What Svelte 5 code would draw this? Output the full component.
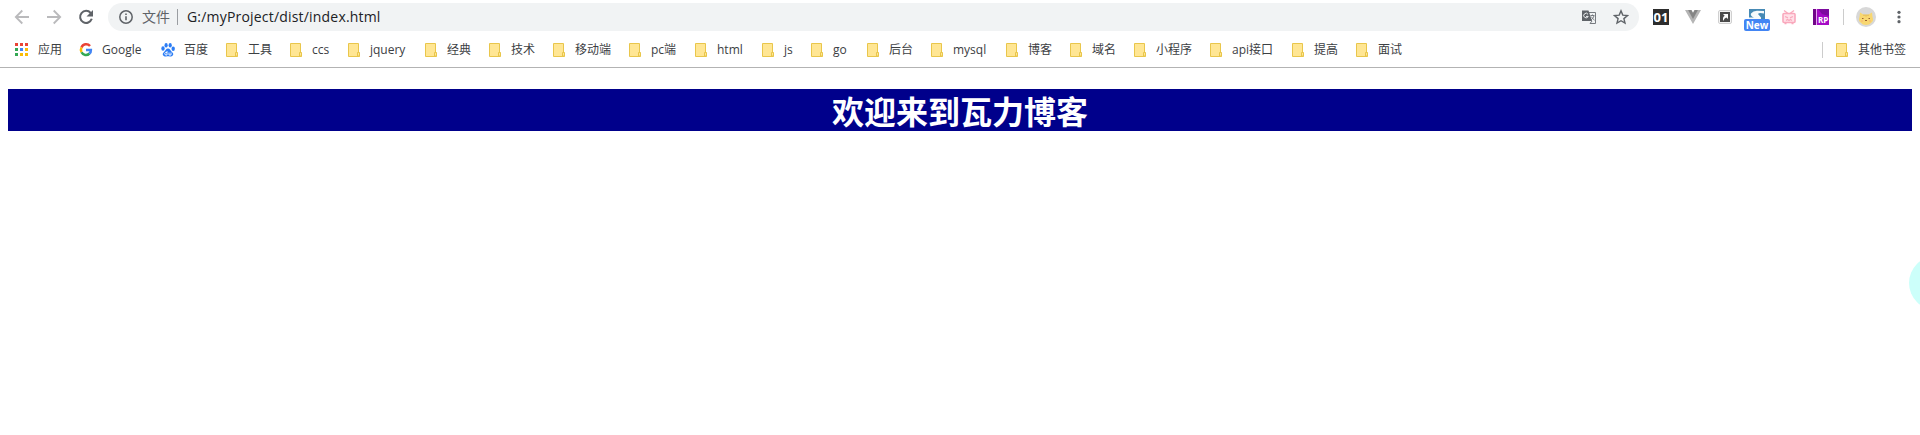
<script>
  const bookmarks = [
    { t: '应用', w: 65, k: 'apps' }, { t: 'Google', w: 82, k: 'google' }, { t: '百度', w: 64, k: 'baidu' },
    { t: '工具', w: 64 }, { t: 'ccs', w: 58 }, { t: 'jquery', w: 77 }, { t: '经典', w: 64 }, { t: '技术', w: 64 },
    { t: '移动端', w: 76 }, { t: 'pc端', w: 66 }, { t: 'html', w: 67 }, { t: 'js', w: 49 }, { t: 'go', w: 56 },
    { t: '后台', w: 64 }, { t: 'mysql', w: 75 }, { t: '博客', w: 64 }, { t: '域名', w: 64 }, { t: '小程序', w: 76 },
    { t: 'api接口', w: 82 }, { t: '提高', w: 64 }, { t: '面试', w: 64 }
  ];
  const dots = ['#ea4335', '#ea4335', '#ea4335', '#34a853', '#4285f4', '#fbbc05', '#34a853', '#fbbc05', '#fbbc05'];
</script>

{#snippet folder()}
  <svg class="ico" width="16" height="16" viewBox="0 0 16 16">
    <path d="M2.500 1.500h10v9.500h1v3.500h-11z" fill="#ffe694" stroke="#e9c64b" />
    <path d="M11.500 14V10.500h2V14z" fill="#ffe694" stroke="#e9c64b" />
  </svg>
{/snippet}

<div class="page">
  <header>
    <div class="toolbar">
      <svg class="nav" viewBox="0 0 16 16"><path d="M15 8H2M8.300 1.500 1.800 8l6.500 6.500" fill="none" stroke="#bababc" stroke-width="1.800" /></svg>
      <svg class="nav" viewBox="0 0 16 16"><path d="M1 8h13M7.700 1.500 14.200 8l-6.500 6.500" fill="none" stroke="#bababc" stroke-width="1.800" /></svg>
      <svg class="nav" viewBox="0 0 16 16"><path d="M12.700 4A6 6 0 1 0 13.800 9.800" fill="none" stroke="#5f6368" stroke-width="2" /><path d="M15 1v6.500H8.500z" fill="#5f6368" /></svg>
      <div class="omnibox">
        <svg class="info" width="16" height="16" viewBox="0 0 16 16"><circle cx="8" cy="8" r="6.200" fill="none" stroke="#5f6368" stroke-width="1.500" /><path d="M7.200 7.200h1.600v4H7.200zM7.200 4.500h1.600V6H7.200z" fill="#5f6368" /></svg>
        <span class="scheme">文件</span>
        <i class="split"></i>
        <span class="url">G:/myProject/dist/index.html</span>
        <svg class="translate" width="16" height="16" viewBox="0 0 16 16">
          <path d="M7 3.500h7.500v11H9" fill="#f1f3f4" stroke="#777b80" />
          <path d="M1 1.500h6.500l3.500 10.500H1z" fill="#5f6368" />
          <path d="M7 5.300A2.300 2.300 0 1 0 7.200 7.400H5" fill="none" stroke="#f1f3f4" />
          <path d="M9.500 6.500h4M11.500 5.500v1M13 7c-.6 1.800-1.700 3-3 4M10.300 8l3.200 3.200M9 14.500l2-2.500" fill="none" stroke="#777b80" />
        </svg>
        <svg class="star" width="16" height="16" viewBox="0 0 16 16"><path d="m8 1.900 1.800 4.200 4.700.4-3.600 3.100 1.100 4.500L8 11.700l-4 2.400 1.100-4.500-3.600-3.100 4.700-.4z" fill="none" stroke="#5f6368" stroke-width="1.400" /></svg>
      </div>
      <div class="extensions">
        <span class="ext one">01</span>
        <svg class="ext" viewBox="0 0 16 16"><path d="M0 1h3.500L8 8.600 12.500 1H16L8 15z" fill="#b5b5b5" /><path d="M3 1h3.500L8 3.800 9.500 1H13L8 10z" fill="#858585" /></svg>
        <svg class="ext" viewBox="0 0 16 16"><rect x="1.500" y="1.500" width="13" height="13" rx="1.500" fill="#f4f4f4" stroke="#d0d0d0" /><rect x="3" y="3" width="10" height="10" fill="#4b4b4b" /><path d="M6 5h5v5L9.300 8.500Q7 9 6.500 12 4.900 8.500 7.700 6.800z" fill="#fff" /></svg>
        <div class="ext badge-host">
          <svg width="16" height="16" viewBox="0 0 16 16"><path d="M0 0h16v16H0z" fill="#478ab5" /><path d="M2 4.500Q4 2 8 1.800L15 2v2.500Q10 3.200 9 5l3 3.500V11H0V8.500h5Q1 7 2 4.500z" fill="#f5f9fb" /></svg>
          <b class="badge">New</b>
        </div>
        <svg class="ext" viewBox="0 0 16 16"><rect x="2" y="4.500" width="12" height="9" rx="1" fill="#ffe1e8" stroke="#f9a9bd" stroke-width="1.600" /><path d="m3 1.500 4 3M13 1.500l-4 3M4 7.500 7 8.800M12 7.500 9 8.800M5 11.500l1.500-1L8 11.500l1.500-1 1.500 1M3.500 14.500h2M10.500 14.500h2" fill="none" stroke="#f9a9bd" stroke-width="1.300" /></svg>
        <svg class="ext" viewBox="0 0 16 16"><path d="M0 0h16v16H0z" fill="#a40bc5" /><path d="M5 0h11v7L9 5z" fill="#7d0b9e" /><path d="M0 0h3v16H0z" fill="#710788" /><path d="M3.500 0v16" stroke="#e7a3f2" /><text x="5" y="14" class="rp">RP</text></svg>
      </div>
      <i class="bar"></i>
      <svg class="avatar" width="20" height="20" viewBox="0 0 20 20">
        <circle cx="10" cy="10" r="10" fill="#d8d8d8" /><path d="M3.500 10 4 5.500 7.500 7.500h5L16 5.500l.5 4.500q1.500 3.500-1 5.500Q13.500 18 10 18t-5.500-2.500Q2 13.500 3.500 10z" fill="#f8d770" /><path d="M6 11.500h1.500M12.500 11.500H14M9 13.500h2" stroke="#9c6330" /><path d="M10 7.500v2M8 7.500v1.500M12 7.500v1.500" stroke="#d7a641" stroke-width=".8" /><path d="M5 14h2M13 14h2" stroke="#f8b078" />
      </svg>
      <svg class="menu" width="16" height="16" viewBox="0 0 16 16"><g fill="#5f6368"><circle cx="8" cy="3.300" r="1.600" /><circle cx="8" cy="8" r="1.600" /><circle cx="8" cy="12.700" r="1.600" /></g></svg>
    </div>

    <nav class="bookmarks">
      {#each bookmarks as b}
        <div class="bm" style="width: {b.w}px">
          {#if b.k === 'apps'}
            <svg class="ico" width="16" height="16" viewBox="0 0 16 16">
              {#each dots as c, i}<rect x={2 + (i % 3) * 5} y={1 + Math.floor(i / 3) * 5} width="3" height="3" fill={c} />{/each}
            </svg>
          {:else if b.k === 'google'}
            <svg class="ico" width="16" height="16" viewBox="0 0 16 16">
              <g fill="none" stroke-width="2.500"><path d="M12 4A5 5 0 0 0 3.500 5.500" stroke="#ea4335" /><path d="M3.500 5.500a5 5 0 0 0 0 4.700" stroke="#fbbc05" /><path d="M3.500 10.200A5 5 0 0 0 11.500 11.500" stroke="#34a853" /><path d="M8 8h4.900Q13 10.300 11.400 11.600" stroke="#4285f4" /></g>
            </svg>
          {:else if b.k === 'baidu'}
            <svg class="ico" width="16" height="16" viewBox="0 0 16 16">
              <g fill="#2c7df5"><ellipse cx="3" cy="6.500" rx="1.700" ry="2.200" /><ellipse cx="6.100" cy="3.300" rx="1.600" ry="2.200" /><ellipse cx="10.200" cy="3.300" rx="1.600" ry="2.200" /><ellipse cx="13.200" cy="6.800" rx="1.700" ry="2.200" /><path d="M8 6.500c2 0 2.500 2.200 4 3.500 3 2.500 0 4.700-2 4.500-1.500-.2-2.500-.2-4 0-2 .2-5-2-2-4.500 1.500-1.300 2-3.500 4-3.500z" /></g>
              <path d="M7 9v4H5.500q-1.500-1.500 0-2.500H7M9 10.500V13h2v-2.500" fill="none" stroke="#fff" stroke-width=".9" />
            </svg>
          {:else}
            {@render folder()}
          {/if}
          <span>{b.t}</span>
        </div>
      {/each}
      <div class="other"><i class="bar2"></i>{@render folder()}<span>其他书签</span></div>
    </nav>
  </header>
  <main><h1>欢迎来到瓦力博客</h1></main>
  <div class="bubble"></div>
</div>

<style>
  :global(body) { margin: 0; background: #fff; overflow: hidden; }
  .page { position: relative; height: 435px; overflow: hidden; font-family: "Open Sans", "Noto Sans CJK SC", sans-serif; }
  header { height: 67px; border-bottom: 1px solid #b3b3b3; }
  svg { display: block; flex: none; }
  .toolbar { display: flex; align-items: center; height: 34px; padding-left: 14px; }
  .nav { width: 16px; height: 16px; margin-right: 16px; }
  .omnibox { box-sizing: border-box; display: flex; align-items: center; width: 1531px; height: 28px; margin-left: -2px; padding: 0 10px; border-radius: 14px; background: #f1f3f4; }
  .scheme { width: 28px; margin-left: 8px; font-size: 14px; line-height: 20px; color: #5f6368; white-space: nowrap; }
  .split { width: 1px; height: 16px; margin: 0 9px 0 7px; background: #9a9da1; }
  .url { font-size: 14px; line-height: 20px; letter-spacing: .19px; color: #202124; white-space: nowrap; }
  .translate { margin-left: auto; }
  .star { margin-left: 16px; }
  .extensions { display: flex; gap: 16px; margin-left: 14px; }
  .ext { width: 16px; height: 16px; }
  .one { background: #2d2d2d; color: #fff; font: bold 13px/16px "Noto Sans", sans-serif; text-align: center; }
  .badge-host { position: relative; }
  .badge { position: absolute; left: -5px; top: 10px; width: 26px; height: 12px; border-radius: 2px; background: #4285f4; color: #fff; font: bold 10px/12px "Open Sans", sans-serif; text-align: center; }
  .rp { font: bold 8px "Open Sans", sans-serif; fill: #fff; }
  .bar { width: 1px; height: 16px; margin: 0 12px 0 14px; background: #ccc; }
  .menu { margin-left: 15px; }
  .bookmarks { display: flex; align-items: center; height: 31px; padding-left: 13px; }
  .bm { display: flex; flex: none; align-items: center; }
  .bm span, .other span { margin-left: 8px; font-size: 12px; line-height: 18px; color: #3c4043; white-space: nowrap; }
  .bm:first-child span { margin-left: 9px; }
  .other { display: flex; align-items: center; margin-left: auto; padding-right: 14px; }
  .bar2 { width: 1px; height: 16px; margin-right: 11px; background: #ccc; }
  main { padding: 21px 8px 0; }
  h1 { height: 42px; margin: 0; background: #00008b; color: #fff; font: bold 32px/42px "Noto Sans CJK SC", sans-serif; text-align: center; }
  .bubble { position: absolute; left: 1909px; top: 256px; width: 54px; height: 54px; border-radius: 50%; background: #ccfffa; }
</style>
